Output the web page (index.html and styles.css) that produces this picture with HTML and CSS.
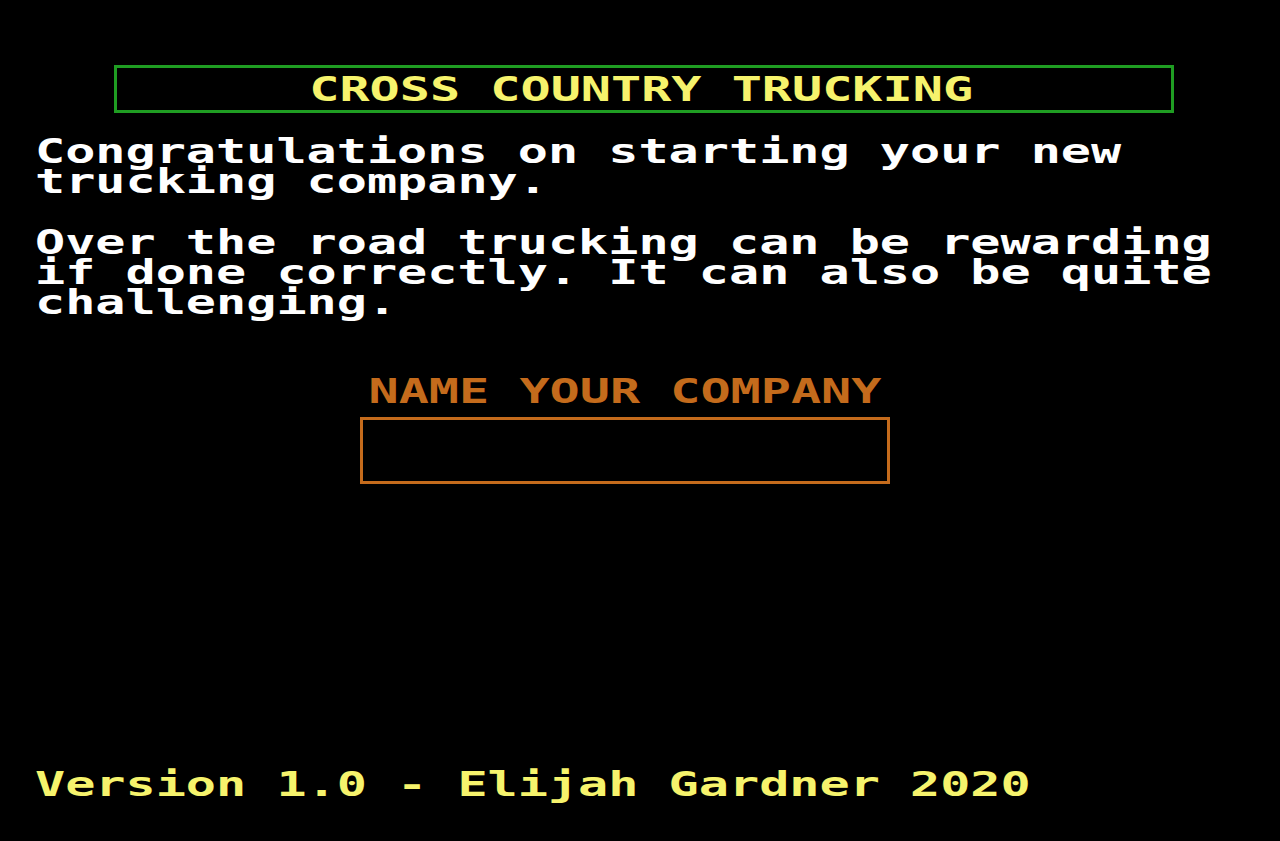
FILE: index.html
```html
<!DOCTYPE html>
<html lang="en">
<head>
<meta charset="utf-8">
<title>Cross Country Trucking</title>
<link rel="stylesheet" href="styles.css">
</head>
<body>
<main class="screen">
  <header class="title-box">
    <h1 class="title"><span class="wide wide-center">CROSS COUNTRY TRUCKING</span></h1>
  </header>
  <section class="intro">
    <p class="para"><span class="wide wide-block">Congratulations on starting your new trucking company.</span></p>
    <p class="para para-second"><span class="wide wide-block">Over the road trucking can be rewarding if done correctly. It can also be quite challenging.</span></p>
  </section>
  <section class="name-form">
    <label class="name-label" for="company"><span class="wide wide-center">NAME YOUR COMPANY</span></label>
    <input class="name-input" id="company" type="text" autocomplete="off">
  </section>
  <footer class="version"><span class="wide">Version 1.0 - Elijah Gardner 2020</span></footer>
</main>
</body>
</html>
```
FILE: styles.css
```css
html, body {
  margin: 0;
  padding: 0;
  background: #000;
}

.screen {
  height: 841px;
  box-sizing: border-box;
  display: flex;
  flex-direction: column;
  font-family: "DejaVu Sans Mono", "Liberation Mono", monospace;
  font-weight: bold;
  font-size: 34px;
  line-height: 30px;
  color: #fff;
  overflow: hidden;
}

.wide {
  display: inline-block;
  white-space: pre;
  transform: scaleX(1.474);
  transform-origin: left top;
}

.wide-center {
  transform-origin: center top;
}

.wide-block {
  display: block;
  width: 40ch;
  white-space: normal;
}

.title-box {
  margin: 65px 0 0 114px;
  width: 1060px;
  height: 48px;
  box-sizing: border-box;
  border: 3px solid #1f9d22;
  display: flex;
  align-items: center;
  justify-content: center;
}

.title {
  margin: 0;
  font-size: inherit;
  font-weight: inherit;
  line-height: 30px;
  color: #f6f36c;
  text-align: center;
  padding-right: 6px;
}

.intro {
  margin: 23px 0 0 35px;
}

.para {
  margin: 0;
  height: 60px;
}

.para-second {
  margin-top: 31px;
  height: 90px;
}

.name-form {
  margin-top: 59px;
  display: flex;
  flex-direction: column;
  align-items: center;
  padding-right: 30px;
}

.name-label {
  color: #c46b1c;
  line-height: 30px;
  display: block;
  text-align: center;
}

.name-input {
  margin-top: 11px;
  width: 530px;
  height: 67px;
  box-sizing: border-box;
  border: 3px solid #c46b1c;
  background: #000;
  color: #c46b1c;
  outline: none;
  padding: 0 12px;
  font: inherit;
}

.version {
  margin-top: auto;
  margin-bottom: 42px;
  padding-left: 35px;
  color: #f6f36c;
}
```
